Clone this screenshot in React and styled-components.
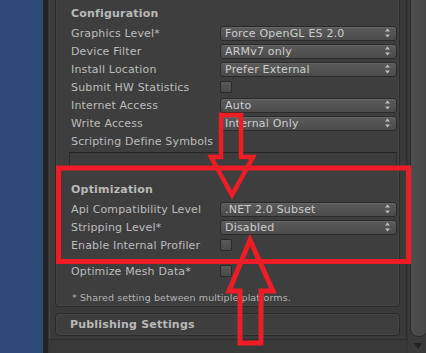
import React from 'react'
import styled, { createGlobalStyle } from 'styled-components'

const GlobalStyle = createGlobalStyle`
  html, body { margin:0; padding:0; background:#3a3a3a; }
  body { overflow:hidden; font-family:"DejaVu Sans", Verdana, sans-serif; }
`;

const Screen = styled.div`
  position:relative;
  display:flex;
  width:426px;
  height:353px;
  overflow:hidden;
  background:#393939;
`;

const SceneStrip = styled.div`
  width:43px;
  flex-shrink:0;
  background:#2d4a79;
`;

const Gutter = styled.div`
  width:5px;
  flex-shrink:0;
  background:#252525;
  border-right:1px solid #333;
`;

const Inspector = styled.div`
  box-sizing:border-box;
  width:358px;
  height:340px;
  flex-shrink:0;
  display:flex;
  flex-direction:column;
  padding:0 6px 0 5px;
  background:#3a3a3a;
  border-left:1px solid #464646;
  border-right:1px solid #2c2c2c;
  border-bottom:1px solid #2c2c2c;
  overflow:hidden;
`;

const Section = styled.div`
  box-sizing:border-box;
  width:345px;
  flex-shrink:0;
  margin-top:${({$top})=>$top}px;
  padding:${({$pad})=>$pad};
  background:#3e3e3e;
  border:1px solid #2b2b2b;
  border-radius:4px;
  box-shadow:inset 0 0 0 1px #444;
`;

const Header = styled.div`
  height:21px;
  margin-top:${({$top})=>$top || 0}px;
  display:flex;
  align-items:center;
  font-weight:bold;
  font-size:11px;
  color:#b9b9b9;
  letter-spacing:0.2px;
`;

const Row = styled.div`
  height:18px;
  margin-top:${({$top})=>$top || 0}px;
  display:grid;
  grid-template-columns:149px 1fr;
  align-items:center;
`;

const Label = styled.span`
  font-size:11px;
  color:#bcbcbc;
  white-space:nowrap;
  letter-spacing:0.15px;
`;

const Note = styled.div`
  height:18px;
  margin-top:8px;
  display:flex;
  align-items:center;
  padding-left:1px;
  font-size:9.5px;
  color:#b4b4b4;
  letter-spacing:0.1px;
`;

const Popup = styled.div`
  box-sizing:border-box;
  height:15px;
  display:flex;
  align-items:center;
  justify-content:space-between;
  padding:0 5px 0 4px;
  border:1px solid #2a2a2a;
  border-radius:3px;
  background:linear-gradient(#5b5b5b, #4b4b4b);
  box-shadow:inset 0 1px 0 #646464;
  font-size:11px;
  color:#cdcdcd;
  letter-spacing:0.2px;
`;

const Check = styled.div`
  box-sizing:border-box;
  width:12px;
  height:12px;
  border:1px solid #2a2a2a;
  border-radius:2px;
  background:linear-gradient(#5a5a5a, #4a4a4a);
`;

const TextField = styled.div`
  box-sizing:border-box;
  height:16px;
  margin:2px 0 0 -2px;
  border:1px solid #2c2c2c;
  border-top-color:#252525;
  background:#3d3d3d;
`;

const PublishTitle = styled.div`
  font-weight:bold;
  font-size:11px;
  color:#b9b9b9;
  letter-spacing:0.2px;
  line-height:21px;
`;

const Scrollbar = styled.div`
  flex:1;
  display:flex;
  flex-direction:column;
  align-items:flex-start;
  background:#3a3a3a;
  border-left:1px solid #333;
`;

const Thumb = styled.div`
  box-sizing:border-box;
  width:18px;
  height:345px;
  margin:-8px 0 0 2px;
  border:1px solid #2a2a2a;
  border-radius:0 0 8px 8px;
  background:linear-gradient(90deg, #4e4e4e, #464646);
`;

const DownArrow = styled.div`
  margin:6px 0 0 6px;
  width:0;
  height:0;
  border-left:4px solid transparent;
  border-right:4px solid transparent;
  border-top:6px solid #222;
`;

const Overlay = styled.svg`
  position:absolute;
  left:0;
  top:0;
  pointer-events:none;
`;

const Arrows = () => (
  <svg width="7" height="10" viewBox="0 0 7 10">
    <path d="M3.5 0.5 L6 3.5 L1 3.5 Z M1 6.5 L6 6.5 L3.5 9.5 Z" fill="#bdbdbd" />
  </svg>
)

const Field = ({ label, value, check }) => (
  <Row>
    <Label>{label}</Label>
    {check ? <Check /> : <Popup>{value}<Arrows /></Popup>}
  </Row>
)

const config = [
  ['Graphics Level*', 'Force OpenGL ES 2.0'],
  ['Device Filter', 'ARMv7 only'],
  ['Install Location', 'Prefer External'],
  ['Submit HW Statistics', null, true],
  ['Internet Access', 'Auto'],
  ['Write Access', 'Internal Only'],
]

const optimization = [
  ['Api Compatibility Level', '.NET 2.0 Subset'],
  ['Stripping Level*', 'Disabled'],
  ['Enable Internal Profiler', null, true],
]

const RED = '#ee1c24'

export default function App() {
  return (
    <Screen>
      <GlobalStyle />
      <SceneStrip />
      <Gutter />
      <Inspector>
        <Section $top={-6} $pad="8px 2px 0 15px">
          <Header>Configuration</Header>
          {config.map(([l, v, c]) => <Field key={l} label={l} value={v} check={c} />)}
          <Row><Label>Scripting Define Symbols</Label></Row>
          <TextField />
          <Header $top={11}>Optimization</Header>
          {optimization.map(([l, v, c]) => <Field key={l} label={l} value={v} check={c} />)}
          <Row $top={8}><Label>Optimize Mesh Data*</Label><Check /></Row>
          <Note>* Shared setting between multiple platforms.</Note>
        </Section>
        <Section $top={6} $pad="0 0 0 14px">
          <PublishTitle>Publishing Settings</PublishTitle>
        </Section>
      </Inspector>
      <Scrollbar>
        <Thumb />
        <DownArrow />
      </Scrollbar>
      <Overlay width="426" height="353" viewBox="0 0 426 353">
        <rect x="58.5" y="168" width="350" height="93.5" fill="none" stroke={RED} strokeWidth="5" />
        <polygon points="221,115 241,115 241,157 253,157 232,195 211,157 221,157" fill="none" stroke={RED} strokeWidth="4.5" strokeLinejoin="miter" />
        <polygon points="250,240 273,291 261,291 261,343 240,343 240,291 229,291" fill="none" stroke={RED} strokeWidth="5" strokeLinejoin="miter" />
      </Overlay>
    </Screen>
  )
}
